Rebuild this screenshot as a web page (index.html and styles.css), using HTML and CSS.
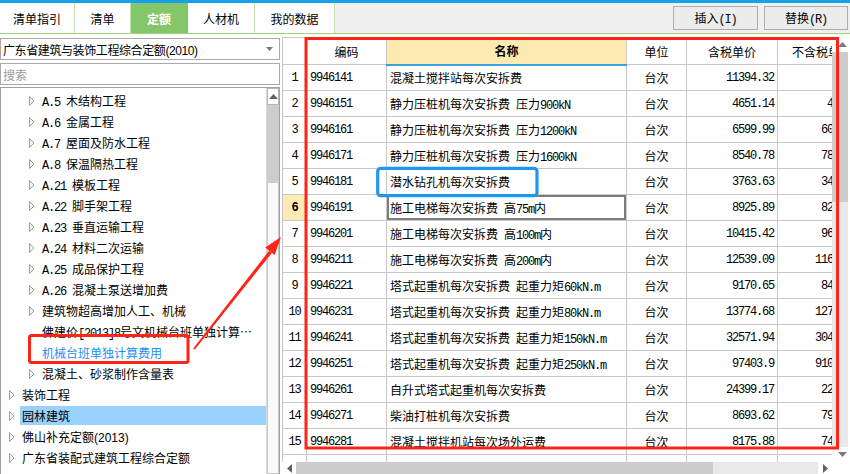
FILE: index.html
```html
<!DOCTYPE html>
<html lang="zh-CN">
<head>
<meta charset="utf-8">
<title>定额</title>
<link rel="stylesheet" href="styles.css">
</head>
<body>
<div class="app">
  <div class="topline"></div>
  <div class="tabbar">
    <div class="tab t1">清单指引</div>
    <div class="tab t2">清单</div>
    <div class="tab t3 active">定额</div>
    <div class="tab t4">人材机</div>
    <div class="tab t5">我的数据</div>
    <div class="tools">
      <button class="btn">插入<span class="m">(I)</span></button>
      <button class="btn">替换<span class="m">(R)</span></button>
    </div>
  </div>

  <div class="main">
    <div class="left">
      <div class="combo">
        <span class="combo-text">广东省建筑与装饰工程综合定额<span class="s">(2010)</span></span>
        <svg class="combo-arrow" width="7" height="4" viewBox="0 0 7 4"><path d="M0 0H7L3.5 4Z" fill="#7a7a7a"/></svg>
      </div>
      <div class="search">搜索</div>
      <div class="tree">
        <div class="tree-list">
          <div class="node l2"><svg class="tri" width="6" height="10" viewBox="0 0 6 10"><path d="M0.5 0.5L5 5L0.5 9.5Z" fill="#f4f4f4" stroke="#a0a0a0"/></svg><span class="label"><span class="m">A.5 </span>木结构工程</span></div>
          <div class="node l2"><svg class="tri" width="6" height="10" viewBox="0 0 6 10"><path d="M0.5 0.5L5 5L0.5 9.5Z" fill="#f4f4f4" stroke="#a0a0a0"/></svg><span class="label"><span class="m">A.6 </span>金属工程</span></div>
          <div class="node l2"><svg class="tri" width="6" height="10" viewBox="0 0 6 10"><path d="M0.5 0.5L5 5L0.5 9.5Z" fill="#f4f4f4" stroke="#a0a0a0"/></svg><span class="label"><span class="m">A.7 </span>屋面及防水工程</span></div>
          <div class="node l2"><svg class="tri" width="6" height="10" viewBox="0 0 6 10"><path d="M0.5 0.5L5 5L0.5 9.5Z" fill="#f4f4f4" stroke="#a0a0a0"/></svg><span class="label"><span class="m">A.8 </span>保温隔热工程</span></div>
          <div class="node l2"><svg class="tri" width="6" height="10" viewBox="0 0 6 10"><path d="M0.5 0.5L5 5L0.5 9.5Z" fill="#f4f4f4" stroke="#a0a0a0"/></svg><span class="label"><span class="m">A.21 </span>模板工程</span></div>
          <div class="node l2"><svg class="tri" width="6" height="10" viewBox="0 0 6 10"><path d="M0.5 0.5L5 5L0.5 9.5Z" fill="#f4f4f4" stroke="#a0a0a0"/></svg><span class="label"><span class="m">A.22 </span>脚手架工程</span></div>
          <div class="node l2"><svg class="tri" width="6" height="10" viewBox="0 0 6 10"><path d="M0.5 0.5L5 5L0.5 9.5Z" fill="#f4f4f4" stroke="#a0a0a0"/></svg><span class="label"><span class="m">A.23 </span>垂直运输工程</span></div>
          <div class="node l2"><svg class="tri" width="6" height="10" viewBox="0 0 6 10"><path d="M0.5 0.5L5 5L0.5 9.5Z" fill="#f4f4f4" stroke="#a0a0a0"/></svg><span class="label"><span class="m">A.24 </span>材料二次运输</span></div>
          <div class="node l2"><svg class="tri" width="6" height="10" viewBox="0 0 6 10"><path d="M0.5 0.5L5 5L0.5 9.5Z" fill="#f4f4f4" stroke="#a0a0a0"/></svg><span class="label"><span class="m">A.25 </span>成品保护工程</span></div>
          <div class="node l2"><svg class="tri" width="6" height="10" viewBox="0 0 6 10"><path d="M0.5 0.5L5 5L0.5 9.5Z" fill="#f4f4f4" stroke="#a0a0a0"/></svg><span class="label"><span class="m">A.26 </span>混凝土泵送增加费</span></div>
          <div class="node l2"><svg class="tri" width="6" height="10" viewBox="0 0 6 10"><path d="M0.5 0.5L5 5L0.5 9.5Z" fill="#f4f4f4" stroke="#a0a0a0"/></svg><span class="label">建筑物超高增加人工、机械</span></div>
          <div class="node l2 leaf"><span class="tri-space"></span><span class="label">佛建价<span class="m">[2013]8</span>号文机械台班单独计算…</span></div>
          <div class="node l2 leaf"><span class="tri-space"></span><span class="label link">机械台班单独计算费用</span></div>
          <div class="node l2"><svg class="tri" width="6" height="10" viewBox="0 0 6 10"><path d="M0.5 0.5L5 5L0.5 9.5Z" fill="#f4f4f4" stroke="#a0a0a0"/></svg><span class="label">混凝土、砂浆制作含量表</span></div>
          <div class="node l1"><svg class="tri" width="6" height="10" viewBox="0 0 6 10"><path d="M0.5 0.5L5 5L0.5 9.5Z" fill="#f4f4f4" stroke="#a0a0a0"/></svg><span class="label">装饰工程</span></div>
          <div class="node l1"><svg class="tri" width="6" height="10" viewBox="0 0 6 10"><path d="M0.5 0.5L5 5L0.5 9.5Z" fill="#f4f4f4" stroke="#a0a0a0"/></svg><span class="label selected">园林建筑</span></div>
          <div class="node l1"><svg class="tri" width="6" height="10" viewBox="0 0 6 10"><path d="M0.5 0.5L5 5L0.5 9.5Z" fill="#f4f4f4" stroke="#a0a0a0"/></svg><span class="label">佛山补充定额<span class="s">(2013)</span></span></div>
          <div class="node l1"><svg class="tri" width="6" height="10" viewBox="0 0 6 10"><path d="M0.5 0.5L5 5L0.5 9.5Z" fill="#f4f4f4" stroke="#a0a0a0"/></svg><span class="label">广东省装配式建筑工程综合定额</span></div>
        </div>
        <div class="tree-scroll">
          <div class="sbtn up"><svg width="9" height="5" viewBox="0 0 9 5"><path d="M0 5H9L4.5 0Z" fill="#606060"/></svg></div>
          <div class="tthumb"></div>
          <div class="ttrack"></div>
        </div>
      </div>
    </div>

    <div class="grid">
      <div class="viewport">
        <table class="sheet">
          <colgroup>
            <col class="c-no"><col class="c-code"><col class="c-name"><col class="c-unit"><col class="c-price"><col class="c-notax">
          </colgroup>
          <thead>
            <tr class="head">
              <th></th><th>编码</th><th class="h-name">名称</th><th>单位</th><th>含税单价</th><th>不含税单价</th>
            </tr>
          </thead>
          <tbody>
            <tr><td class="no m">1</td><td class="code m">9946141</td><td class="name">混凝土搅拌站每次安拆费</td><td class="unit">台次</td><td class="num m">11394.32</td><td class="num m"></td></tr>
            <tr><td class="no m">2</td><td class="code m">9946151</td><td class="name">静力压桩机每次安拆费<span class="m"> </span>压力<span class="m">900kN</span></td><td class="unit">台次</td><td class="num m">4651.14</td><td class="num m">4290.4</td></tr>
            <tr><td class="no m">3</td><td class="code m">9946161</td><td class="name">静力压桩机每次安拆费<span class="m"> </span>压力<span class="m">1200kN</span></td><td class="unit">台次</td><td class="num m">6599.99</td><td class="num m">6030.91</td></tr>
            <tr><td class="no m">4</td><td class="code m">9946171</td><td class="name">静力压桩机每次安拆费<span class="m"> </span>压力<span class="m">1600kN</span></td><td class="unit">台次</td><td class="num m">8540.78</td><td class="num m">7805.42</td></tr>
            <tr><td class="no m">5</td><td class="code m">9946181</td><td class="name">潜水钻孔机每次安拆费</td><td class="unit">台次</td><td class="num m">3763.63</td><td class="num m">3439.31</td></tr>
            <tr class="current"><td class="no m">6</td><td class="code m">9946191</td><td class="name focus">施工电梯每次安拆费<span class="m"> </span>高<span class="m">75m</span>内</td><td class="unit">台次</td><td class="num m">8925.89</td><td class="num m">8217.83</td></tr>
            <tr><td class="no m">7</td><td class="code m">9946201</td><td class="name">施工电梯每次安拆费<span class="m"> </span>高<span class="m">100m</span>内</td><td class="unit">台次</td><td class="num m">10415.42</td><td class="num m">9651.25</td></tr>
            <tr><td class="no m">8</td><td class="code m">9946211</td><td class="name">施工电梯每次安拆费<span class="m"> </span>高<span class="m">200m</span>内</td><td class="unit">台次</td><td class="num m">12539.09</td><td class="num m">11650.33</td></tr>
            <tr><td class="no m">9</td><td class="code m">9946221</td><td class="name">塔式起重机每次安拆费<span class="m"> </span>起重力矩<span class="m">60kN.m</span></td><td class="unit">台次</td><td class="num m">9170.65</td><td class="num m">8432.06</td></tr>
            <tr><td class="no m">10</td><td class="code m">9946231</td><td class="name">塔式起重机每次安拆费<span class="m"> </span>起重力矩<span class="m">80kN.m</span></td><td class="unit">台次</td><td class="num m">13774.68</td><td class="num m">12732.57</td></tr>
            <tr><td class="no m">11</td><td class="code m">9946241</td><td class="name">塔式起重机每次安拆费<span class="m"> </span>起重力矩<span class="m">150kN.m</span></td><td class="unit">台次</td><td class="num m">32571.94</td><td class="num m">30423.54</td></tr>
            <tr><td class="no m">12</td><td class="code m">9946251</td><td class="name">塔式起重机每次安拆费<span class="m"> </span>起重力矩<span class="m">250kN.m</span></td><td class="unit">台次</td><td class="num m">97403.9</td><td class="num m">91043.25</td></tr>
            <tr><td class="no m">13</td><td class="code m">9946261</td><td class="name">自升式塔式起重机每次安拆费</td><td class="unit">台次</td><td class="num m">24399.17</td><td class="num m">22583.1</td></tr>
            <tr><td class="no m">14</td><td class="code m">9946271</td><td class="name">柴油打桩机每次安拆费</td><td class="unit">台次</td><td class="num m">8693.62</td><td class="num m">7987.04</td></tr>
            <tr><td class="no m">15</td><td class="code m">9946281</td><td class="name">混凝土搅拌机站每次场外运费</td><td class="unit">台次</td><td class="num m">8175.88</td><td class="num m">7435.92</td></tr>
            <tr><td class="no m"></td><td class="code m"></td><td class="name"></td><td class="unit"></td><td class="num m"></td><td class="num m"></td></tr>
          </tbody>
        </table>
      </div>
      <div class="vbar">
        <div class="vbtn"><svg width="9" height="5" viewBox="0 0 9 5"><path d="M0 5H9L4.5 0Z" fill="#7a7a7a"/></svg></div>
        <div class="vthumb"></div>
        <div class="vtrack"></div>
        <div class="vbtn"><svg width="9" height="5" viewBox="0 0 9 5"><path d="M0 0H9L4.5 5Z" fill="#7a7a7a"/></svg></div>
      </div>
      <div class="edge"></div>
      <div class="hbar">
        <div class="hbtn"><svg width="5" height="9" viewBox="0 0 5 9"><path d="M5 0V9L0 4.5Z" fill="#606060"/></svg></div>
        <div class="hthumb"></div>
        <div class="htrack"></div>
        <div class="hbtn"><svg width="5" height="9" viewBox="0 0 5 9"><path d="M0 0V9L5 4.5Z" fill="#606060"/></svg></div>
      </div>
      <div class="corner"></div>
    </div>
  </div>

  <svg class="annot" width="850" height="474" viewBox="0 0 850 474">
    <rect x="306" y="38.5" width="531.5" height="409.5" fill="none" stroke="#ff2418" stroke-width="3"/>
    <rect x="29.5" y="335.5" width="158.5" height="27" rx="2" fill="none" stroke="#ff2418" stroke-width="3"/>
    <rect x="377.7" y="168.3" width="159.3" height="27.4" rx="3" fill="none" stroke="#2196f0" stroke-width="3.2"/>
    <polygon points="193.2,348.4 194.8,349.6 271.9,252.9 269.1,250.7" fill="#ff2418"/>
    <polygon points="281,237 265.2,247.5 274.6,254.9" fill="#ff2418"/>
  </svg>
</div>
</body>
</html>
```

FILE: styles.css
```css
* {
  box-sizing: border-box;
  margin: 0;
  padding: 0;
}

html,
body {
  width: 850px;
  height: 474px;
  overflow: hidden;
  background: #fff;
}

body {
  font-family: "Noto Sans CJK SC", "Liberation Sans", sans-serif;
  font-size: 12px;
  color: #000;
}

.app {
  position: relative;
  width: 850px;
  height: 474px;
  display: flex;
  flex-direction: column;
}

.m {
  font-family: "Liberation Mono", "Noto Sans CJK SC", monospace;
  font-size: 12px;
  letter-spacing: -1.2px;
}

.s {
  font-family: "Liberation Sans", sans-serif;
  font-size: 12px;
}

/* top */
.topline {
  height: 3px;
  background: #15a2e8;
  flex: none;
}

.tabbar {
  flex: none;
  display: flex;
  height: 31px;
  background: #f0f0f0;
  border-bottom: 1px solid #9fd07e;
}

.tab {
  display: flex;
  align-items: center;
  justify-content: center;
  background: #fff;
  border-right: 1px solid #c4e3af;
  font-size: 12px;
}

.t1 { width: 75px; }
.t2 { width: 56px; }
.t3 { width: 57px; }
.t4 { width: 67px; }
.t5 { width: 80px; }

.tab.active {
  background: #86c66a;
  color: #fff;
  font-weight: bold;
  border-right-color: #86c66a;
}

.tools {
  margin-left: auto;
  display: flex;
  gap: 6px;
  padding: 3px 2px 0 0;
}

.btn {
  width: 85px;
  height: 24px;
  border: 1px solid #adadad;
  background: #ececec;
  font-family: inherit;
  font-size: 12px;
  color: #000;
}

.btn + .btn {
  width: 84px;
}

/* main */
.main {
  flex: 1;
  display: flex;
  gap: 2px;
  min-height: 0;
}

.left {
  width: 280px;
  display: flex;
  flex-direction: column;
  padding-top: 4px;
}

.combo {
  height: 22px;
  border: 1px solid #a9a9a9;
  display: flex;
  align-items: center;
  padding: 0 6px 0 2px;
  letter-spacing: -0.4px;
}

.combo-arrow {
  margin-left: auto;
}

.search {
  margin-top: 3px;
  height: 22px;
  border: 1px solid #a9a9a9;
  display: flex;
  align-items: center;
  padding-left: 2px;
  color: #9a9a9a;
}

.tree {
  margin-top: 2px;
  flex: 1;
  border: 1px solid #a0a0a0;
  border-bottom: none;
  display: flex;
  min-height: 0;
}

.tree-list {
  flex: 1;
  padding-top: 2px;
  overflow: hidden;
}

.node {
  height: 21px;
  display: flex;
  align-items: center;
  white-space: nowrap;
}

.node.l2 { padding-left: 28px; }
.node.l1 { padding-left: 8px; }

.tri,
.tri-space {
  flex: none;
  width: 6px;
  height: 10px;
  margin-right: 5px;
}

.label {
  flex: 1;
  display: block;
  height: 19px;
  line-height: 19px;
  padding-left: 2px;
  overflow: hidden;
  white-space: pre;
}

.label.link {
  color: #1f8ff0;
}

.label.selected {
  background: #99d1ff;
}

.tree-scroll {
  width: 13px;
  flex: none;
  display: flex;
  flex-direction: column;
  border-left: 1px solid #d8d8d8;
  background: #f4f4f4;
}

.sbtn {
  height: 17px;
  background: #fff;
  border: 1px solid #b8b8b8;
  display: flex;
  align-items: center;
  justify-content: center;
}

.tthumb {
  height: 78px;
  background: #cdcdcd;
}

.ttrack {
  flex: 1;
  border: 1px solid #c8c8c8;
  border-top: none;
  background: #fafafa;
}

/* grid */
.grid {
  margin-top: 3px;
  width: 568px;
  display: grid;
  grid-template-columns: 550px 16px 2px;
  grid-template-rows: 425px 16px;
}

.viewport {
  overflow: hidden;
}

.sheet {
  table-layout: fixed;
  border-collapse: collapse;
  width: 584px;
}

.c-no { width: 24px; }
.c-code { width: 80px; }
.c-name { width: 240px; }
.c-unit { width: 60px; }
.c-price { width: 91px; }
.c-notax { width: 89px; }

.sheet th,
.sheet td {
  border: 1px solid #c8c8c8;
  white-space: pre;
  overflow: hidden;
  padding: 0 3px;
}

.sheet tr {
  height: 26px;
}

.sheet tr.head {
  height: 27px;
}

.sheet th {
  font-weight: normal;
  text-align: center;
  background: #fff;
}

.sheet th.h-name {
  background: #fdeab0;
  font-weight: bold;
  border-bottom: 2px solid #3a9fdc;
}

.no {
  text-align: center;
}

.current .no {
  background: #fdeab4;
  font-weight: bold;
}

.code {
  text-align: left;
}

.unit {
  text-align: center;
}

.num {
  text-align: right;
}

.name.focus {
  box-shadow: inset 0 0 0 2px #7d7d7d;
}

.vbar {
  display: flex;
  flex-direction: column;
  background: #e8e8e8;
}

.vbtn {
  height: 15px;
  flex: none;
  background: #fff;
  display: flex;
  align-items: center;
  justify-content: center;
  padding-left: 5px;
}

.vthumb {
  height: 150px;
  background: #cdcdcd;
}

.vtrack {
  flex: 1;
  background: #e8e8e8;
}

.edge {
  background: #fff;
}

.hbar {
  display: flex;
  background: #e8e8e8;
}

.hbtn {
  width: 14px;
  flex: none;
  background: #fff;
  display: flex;
  align-items: center;
  justify-content: center;
  padding-bottom: 4px;
}

.hthumb {
  width: 417px;
  background: #cdcdcd;
}

.htrack {
  flex: 1;
}

.corner {
  grid-column: 2 / 4;
  background: #fff;
}

/* annotations */
.annot {
  position: absolute;
  left: 0;
  top: 0;
  pointer-events: none;
}
```
